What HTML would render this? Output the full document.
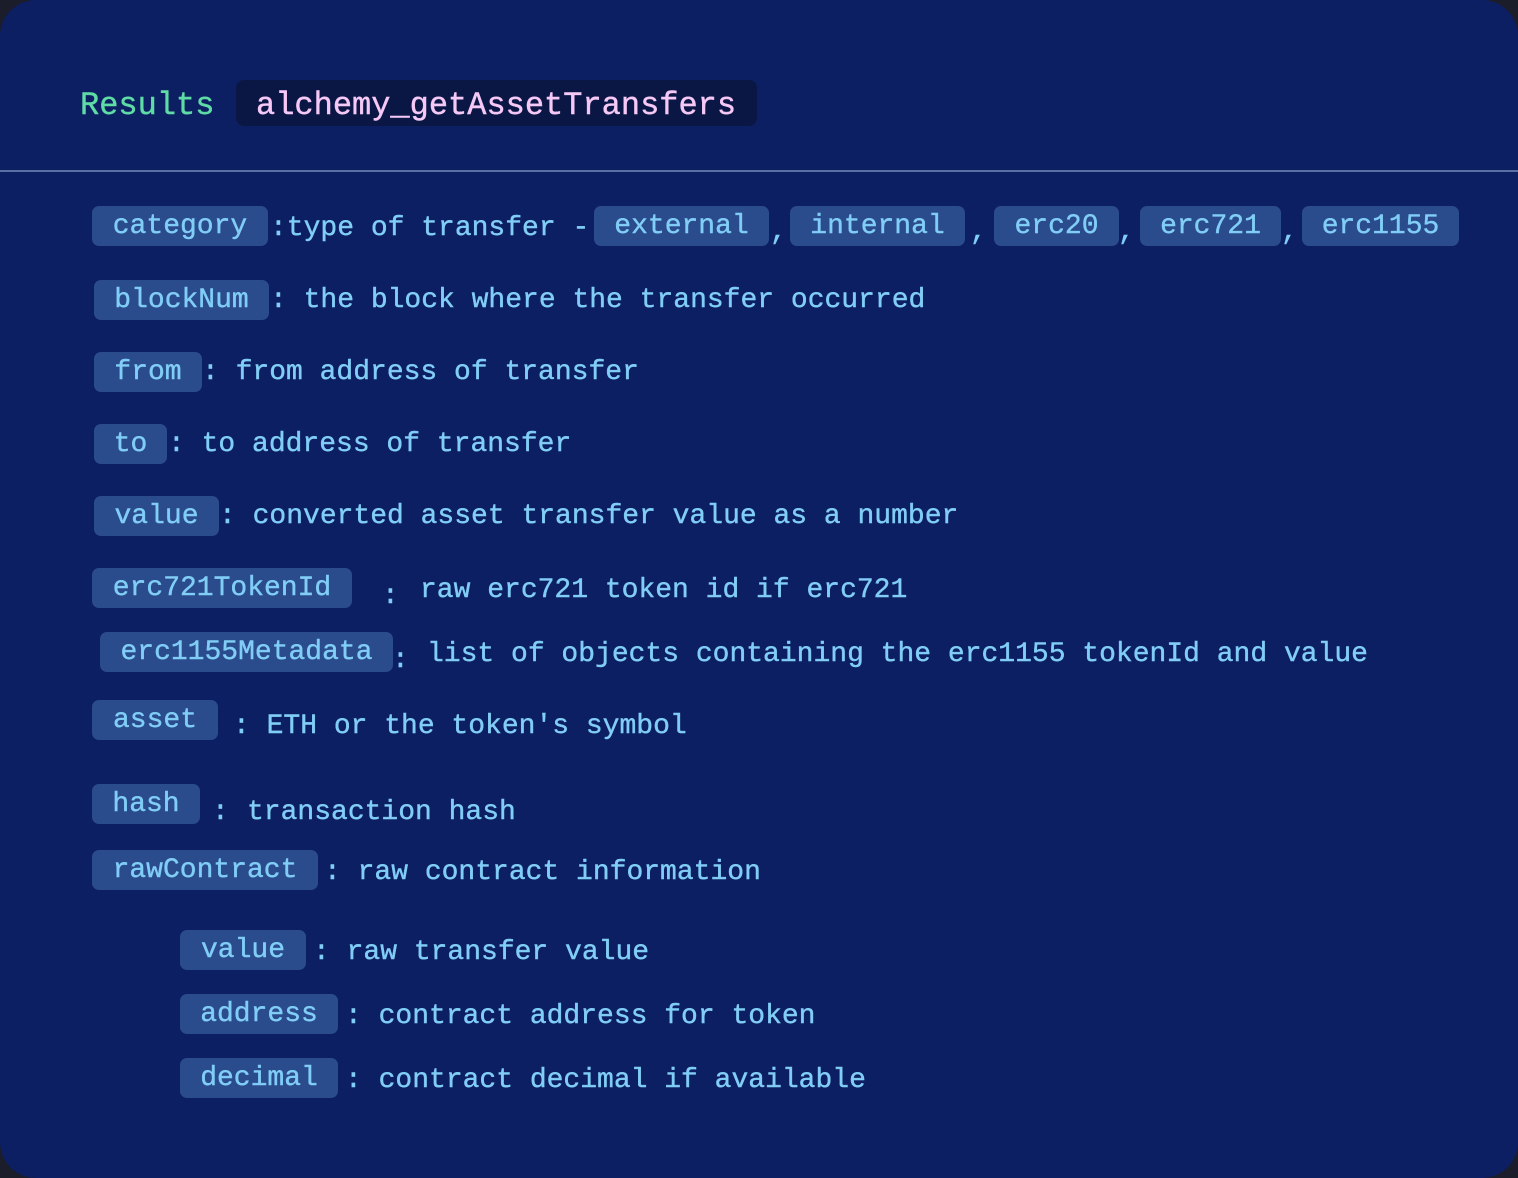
<!DOCTYPE html>
<html><head><meta charset="utf-8"><style>
html,body{margin:0;padding:0;background:#1b1d2a;}
#c{position:relative;width:1518px;height:1178px;background:#0d1f63;border-radius:36px;overflow:hidden;font-family:"Liberation Mono",monospace;font-size:28px;color:#80cdf6;-webkit-text-stroke:0.4px currentColor;}
.t{position:absolute;height:40px;background:#2a4b8c;border-radius:7px;line-height:42px;text-align:center;white-space:pre;}
.x{position:absolute;line-height:40px;white-space:pre;}
</style></head><body><div id="c">
<div class="x" style="left:80px;top:86px;color:#5fdca6;font-size:32px;">Results</div>
<div style="position:absolute;left:236px;top:80px;width:521px;height:46px;background:#0a1745;border-radius:8px;"></div>
<div class="x" style="left:256px;top:86px;color:#f5c8f5;font-size:32px;">alchemy_getAssetTransfers</div>
<div style="position:absolute;left:0;top:170px;width:1518px;height:2px;background:#5a6fa2;"></div>

<div class="t" style="left:92px;top:206px;width:176px">category</div>
<div class="x" style="left:270px;top:209px">:type of transfer -</div>
<div class="t" style="left:594px;top:206px;width:175px">external</div>
<div class="x" style="left:770px;top:213px">,</div>
<div class="t" style="left:790px;top:206px;width:175px">internal</div>
<div class="x" style="left:970px;top:213px">,</div>
<div class="t" style="left:994px;top:206px;width:125px">erc20</div>
<div class="x" style="left:1118px;top:213px">,</div>
<div class="t" style="left:1140px;top:206px;width:141px">erc721</div>
<div class="x" style="left:1281px;top:213px">,</div>
<div class="t" style="left:1302px;top:206px;width:157px">erc1155</div>

<div class="t" style="left:94px;top:280px;width:175px">blockNum</div>
<div class="x" style="left:270px;top:281px">: the block where the transfer occurred</div>
<div class="t" style="left:94px;top:352px;width:108px">from</div>
<div class="x" style="left:202px;top:353px">: from address of transfer</div>
<div class="t" style="left:94px;top:424px;width:73px">to</div>
<div class="x" style="left:168px;top:425px">: to address of transfer</div>
<div class="t" style="left:94px;top:496px;width:125px">value</div>
<div class="x" style="left:219px;top:497px">: converted asset transfer value as a number</div>
<div class="t" style="left:92px;top:568px;width:260px">erc721TokenId</div>
<div class="x" style="left:382px;top:577px">:</div>
<div class="x" style="left:420px;top:571px">raw erc721 token id if erc721</div>
<div class="t" style="left:100px;top:632px;width:293px">erc1155Metadata</div>
<div class="x" style="left:392px;top:641px">:</div>
<div class="x" style="left:427px;top:635px">list of objects containing the erc1155 tokenId and value</div>
<div class="t" style="left:92px;top:700px;width:126px">asset</div>
<div class="x" style="left:233px;top:707px">: ETH or the token's symbol</div>
<div class="t" style="left:92px;top:784px;width:108px">hash</div>
<div class="x" style="left:212px;top:793px">:</div>
<div class="x" style="left:247px;top:793px">transaction hash</div>
<div class="t" style="left:92px;top:850px;width:226px">rawContract</div>
<div class="x" style="left:324px;top:853px">: raw contract information</div>
<div class="t" style="left:180px;top:930px;width:126px">value</div>
<div class="x" style="left:313px;top:933px">: raw transfer value</div>
<div class="t" style="left:180px;top:994px;width:158px">address</div>
<div class="x" style="left:345px;top:997px">: contract address for token</div>
<div class="t" style="left:180px;top:1058px;width:158px">decimal</div>
<div class="x" style="left:345px;top:1061px">: contract decimal if available</div>
</div></body></html>
